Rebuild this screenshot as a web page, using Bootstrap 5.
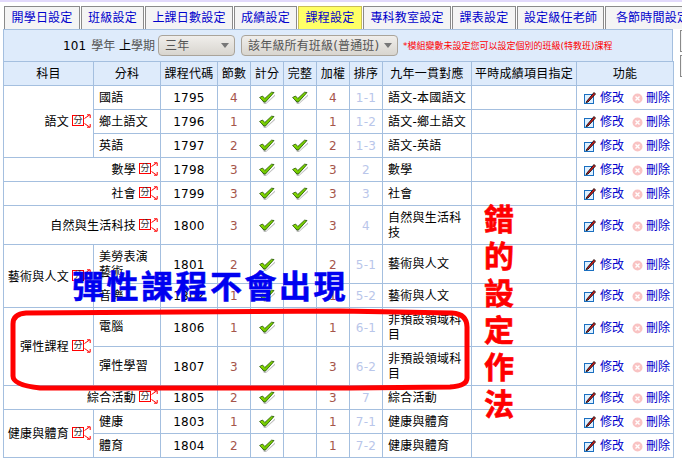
<!DOCTYPE html>
<html lang="zh-Hant"><head><meta charset="utf-8">
<link rel="stylesheet" href="https://cdn.jsdelivr.net/npm/bootstrap@5.3.0/dist/css/bootstrap.min.css">
<style>
html,body{height:466px;overflow:hidden;background:#fff}
body{font:12px/16px "DejaVu Sans","Noto Sans CJK TC",sans-serif;color:#000;border-top:2px solid #e2d9fb;width:682px;position:relative}
.shell{padding:4px 0 0 4px;width:682px;overflow:hidden}
.tabrow{display:flex;gap:1px;width:720px;height:23px;align-items:stretch;white-space:nowrap}
.tabx{display:block;border:1px solid #8a8a8a;border-bottom:0;background:#f4f4f4;color:#0000cc;text-decoration:none;text-align:center;line-height:23px;letter-spacing:.2px}
.tabx.on{background:#ffff66;border-color:#c9bd58}
.tw1{width:76px}.tw2{width:63px}.tw3{width:88px}.tw4{width:63px}.tw5{width:64px}.tw6{width:88px}.tw7{width:64px}.tw8{width:87px}.tw9{width:95px}
.bodyrow{display:flex;gap:7px;width:700px;margin-left:-1px}
.mainx{width:670px;flex:none}
.sidebits{display:flex;flex-direction:column;gap:3px;padding-top:1px;width:20px}
.sidebits i{display:block;height:22px;border:1px solid #8a8a8a;background:#f4f4f4}
.panel{border:1px solid #a4bfdf;border-bottom:0;background:#deebfb;height:32px;display:flex;align-items:center;padding-left:59px;white-space:nowrap}
.yr{margin-right:5px;letter-spacing:.1px}
.mut{color:#555}
.selx{height:21px;border:1px solid #aaa49a;border-radius:4px;background:linear-gradient(#f0eeeb,#d8d5cf);color:#555;display:flex;align-items:center;justify-content:space-between;padding:0 5px 0 6px;letter-spacing:.15px}
.sa{width:77px;margin:0 6px 0 3px}.sb{width:157px;margin-right:5px}
.caretx{width:0;height:0;border:4px solid transparent;border-top:5px solid #777;border-bottom:0}
.note{color:#f00;font-size:9px}
.gridx{width:670px;margin:0;table-layout:fixed;border-collapse:collapse;background:#fff}
.gridx th,.gridx td{border:1px solid #a4bfdf;padding:1px 0 0;vertical-align:middle;text-align:center;font-weight:400;letter-spacing:.25px;box-shadow:none;background:transparent}
.gridx thead th{background:#deebfb;height:24px;padding:0}
.gridx td.tl{text-align:left;padding-left:5px;padding-right:3px;line-height:15px}
.gridx td.tr{text-align:right;padding-right:3px}
.gridx td.fn{text-align:left;padding-left:7px;white-space:nowrap;letter-spacing:0}
.r24{height:24px}.r39{height:39px}
.numx{letter-spacing:.2px}
.ct{color:#a5554a}.od{color:#b9c6ea}
.fnk{color:#0000cc;text-decoration:none;margin-left:4px}
.fnk+svg{margin-left:8px}
.fnk.delx{margin-left:3px}
.gridx svg{vertical-align:-2px}
.fen{display:inline-block;position:relative;width:18px;height:13px;margin-left:3px;vertical-align:-1px;line-height:9px}
.fenb{position:absolute;left:0;top:1px;width:12px;height:11px;border:1px solid #f00;font-size:9px;text-align:center;line-height:9px;color:#333;letter-spacing:0;background:#fff}
.fen svg{position:absolute;left:12px;top:0}
.bigblue{position:absolute;left:72px;top:267px;color:#0000f0;font:700 32px/36px "DejaVu Sans","Noto Sans CJK TC",sans-serif;letter-spacing:2.5px;white-space:nowrap;-webkit-text-stroke:.5px #0000f0}
.bigred{position:absolute;left:481px;top:197px;width:36px;color:#f00;font:700 30px/37px "Noto Sans CJK TC",sans-serif;text-align:center;-webkit-text-stroke:.6px #f00}
.ringx{position:absolute;left:0;top:0;pointer-events:none}
</style></head><body>
<svg width="0" height="0" style="position:absolute"><defs>
<linearGradient id="gg" x1="0" y1="0" x2="1" y2="1"><stop offset="0" stop-color="#a6f000"/><stop offset="1" stop-color="#4fb000"/></linearGradient>
<symbol id="ck" viewBox="0 0 16 13"><path d="M2.500 9l2-.5 2.500 3.500 9-8.500v1.500l-9 8h-2z" fill="#888" opacity=".55"/><path d="M.6 6.500L3.500 5l2.300 2.500L12.500 1.200 15 1.500 6.500 11H5z" fill="url(#gg)" stroke="#1f5200" stroke-width=".8"/></symbol>
<symbol id="pn" viewBox="0 0 12 13"><rect x=".5" y="3.500" width="9" height="9" fill="#dff0ff" stroke="#1a6fc0"/><path d="M2.500 10.500L10 1.500 11.500 3 4 11l-2 .5z" fill="#d81818" stroke="#111" stroke-width=".9"/></symbol>
<symbol id="dl" viewBox="0 0 11 11"><circle cx="5.500" cy="5.500" r="5" fill="#f9c3c3"/><path d="M3.500 3.500l4 4M7.500 3.500l-4 4" stroke="#fff" stroke-width="1.400"/></symbol>
<symbol id="ar" viewBox="0 0 7 14"><path d="M.5 4.500L5.500 1M3 .8h3.200V4M.5 9.500L5.500 13M3 13.200h3.200V10" fill="none" stroke="#f00"/></symbol>
</defs></svg>
<div class="shell">
<nav class="tabrow">
<a class="tabx tw1" href="#">開學日設定</a><a class="tabx tw2" href="#">班級設定</a><a class="tabx tw3" href="#">上課日數設定</a><a class="tabx tw4" href="#">成績設定</a><a class="tabx tw5 on" href="#">課程設定</a><a class="tabx tw6" href="#">專科教室設定</a><a class="tabx tw7" href="#">課表設定</a><a class="tabx tw8" href="#">設定級任老師</a><a class="tabx tw9" href="#">各節時間設定</a>
</nav>
<div class="bodyrow">
<div class="mainx">
<div class="panel"><span class="yr">101</span><span class="mut">學年</span>&nbsp;<span>上</span><span class="mut">學期</span>
<div class="selx sa"><span>三年</span><i class="caretx"></i></div>
<div class="selx sb"><span>該年級所有班級(普通班)</span><i class="caretx"></i></div>
<span class="note">*模組變數未設定您可以設定個別的班級(特教班)課程</span></div>
<table class="gridx">
<colgroup><col style="width:90px"><col style="width:67px"><col style="width:57px"><col style="width:33px"><col style="width:33px"><col style="width:33px"><col style="width:33px"><col style="width:33px"><col style="width:89px"><col style="width:105px"><col style="width:97px"></colgroup>
<thead><tr><th>科目</th><th>分科</th><th>課程代碼</th><th>節數</th><th>計分</th><th>完整</th><th>加權</th><th>排序</th><th>九年一貫對應</th><th>平時成績項目指定</th><th>功能</th></tr></thead>
<tbody id="tb"></tbody>
</table>
</div>
<div class="sidebits"><i></i><i></i></div>
</div>
</div>
<svg class="ringx" width="682" height="466"><path d="M26 311Q13 312 13 322V374Q13 383 40 386L350 386L450 385Q467 384 467 376V325Q467 312 452 311L340 309Z" fill="none" stroke="#f00" stroke-width="5"/></svg>
<div class="bigblue">彈性課程不會出現</div>
<div class="bigred">錯<br>的<br>設<br>定<br>作<br>法</div>
<script>
var rows=[
["語文",3,"國語","1795",4,1,1,4,"1-1","語文-本國語文",24],
[null,0,"鄉土語文","1796",1,1,0,1,"1-2","語文-鄉土語文",24],
[null,0,"英語","1797",2,1,1,2,"1-3","語文-英語",24],
["數學",-1,"","1798",3,1,1,3,"2","數學",24],
["社會",-1,"","1799",3,1,1,3,"3","社會",24],
["自然與生活科技",-1,"","1800",3,1,1,3,"4","自然與生活科技",39],
["藝術與人文",2,"美勞表演藝術","1801",2,1,0,2,"5-1","藝術與人文",39],
[null,0,"音樂","1802",1,1,0,1,"5-2","藝術與人文",24],
["彈性課程",2,"電腦","1806",1,1,0,1,"6-1","非預設領域科目",39],
[null,0,"彈性學習","1807",3,1,0,3,"6-2","非預設領域科目",39],
["綜合活動",-1,"","1805",2,1,0,3,"7","綜合活動",24],
["健康與體育",2,"健康","1803",1,1,0,1,"7-1","健康與體育",24],
[null,0,"體育","1804",2,1,0,1,"7-2","健康與體育",24]];
var ck='<svg width="16" height="13"><use href="#ck"/></svg>';
var fen='<span class="fen"><span class="fenb">分</span><svg width="7" height="14"><use href="#ar"/></svg></span>';
var h='';
rows.forEach(function(r){
 h+='<tr class="'+(r[10]==39?'r39':'r24')+'">';
 if(r[0]){ if(r[1]<0) h+='<td class="tr" colspan="2">'+r[0]+fen+'</td>';
   else h+='<td class="tr" rowspan="'+r[1]+'">'+r[0]+fen+'</td>'; }
 if(r[1]>=0) h+='<td class="tl">'+r[2]+'</td>';
 h+='<td class="numx">'+r[3]+'</td><td class="ct">'+r[4]+'</td><td>'+(r[5]?ck:'')+'</td><td>'+(r[6]?ck:'')+'</td><td class="ct">'+r[7]+'</td><td class="od">'+r[8]+'</td><td class="tl">'+r[9]+'</td><td></td>';
 h+='<td class="fn"><svg width="12" height="13"><use href="#pn"/></svg><a class="fnk" href="#">修改</a><svg width="11" height="11"><use href="#dl"/></svg><a class="fnk delx" href="#">刪除</a></td></tr>';
});
document.getElementById('tb').innerHTML=h;
</script>
<script src="https://cdn.jsdelivr.net/npm/bootstrap@5.3.0/dist/js/bootstrap.bundle.min.js"></script>
</body></html>
